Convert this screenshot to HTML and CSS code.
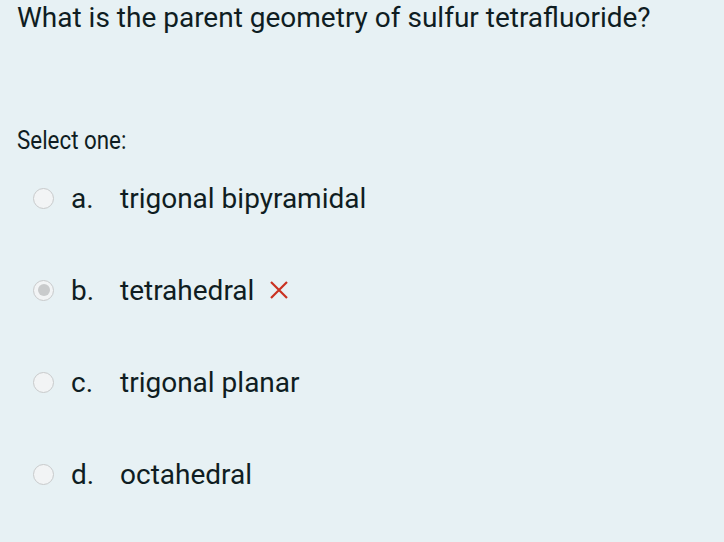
FILE: index.html
```html
<!DOCTYPE html>
<html>
<head>
<meta charset="utf-8">
<link rel="stylesheet" href="styles.css">
</head>
<body>
<div class="question">
  <div class="qtext">What is the parent geometry of sulfur tetrafluoride?</div>
  <div class="prompt"><span class="prompt-inner">Select one:</span></div>
  <div class="answers">
    <div class="option"><span class="radio"></span><span class="letter">a.</span><span class="label">trigonal bipyramidal</span></div>
    <div class="option"><span class="radio checked"></span><span class="letter">b.</span><span class="label">tetrahedral</span>
      <svg class="wrong" width="20" height="20" viewBox="0 0 20 20"><path d="M2 2 L18 18 M18 2 L2 18" stroke="#ca3120" stroke-width="2.2" fill="none"/></svg>
    </div>
    <div class="option"><span class="radio"></span><span class="letter">c.</span><span class="label">trigonal planar</span></div>
    <div class="option"><span class="radio"></span><span class="letter">d.</span><span class="label">octahedral</span></div>
  </div>
</div>
</body>
</html>
```
FILE: styles.css
```css
html, body {
  margin: 0;
  padding: 0;
  background: #e7f1f4;
  height: 100%;
}
body {
  font-family: Roboto, "Liberation Sans", sans-serif;
  color: #0f1d22;
}
.question {
  padding: 0 0 0 17px;
}
.qtext {
  font-size: 28px;
  line-height: 36px;
}
.prompt {
  margin-top: 86px;
  font-size: 26px;
  line-height: 36px;
}
.prompt-inner {
  display: inline-block;
  transform: scaleX(0.86);
  transform-origin: left center;
}
.answers {
  margin-top: 22px;
  display: flex;
  flex-direction: column;
  gap: 56px;
}
.option {
  display: flex;
  align-items: center;
  height: 36px;
  font-size: 28px;
}
.radio {
  box-sizing: border-box;
  width: 21px;
  height: 21px;
  border-radius: 50%;
  border: 1.5px solid #c8cacb;
  background: #f2f4f5;
  margin-left: 16px;
  margin-right: 17px;
  display: flex;
  align-items: center;
  justify-content: center;
}
.radio.checked::after {
  content: "";
  width: 12px;
  height: 12px;
  border-radius: 50%;
  background: #c9cbcc;
}
.letter {
  width: 49px;
}
.wrong {
  margin-left: 15px;
}
```
